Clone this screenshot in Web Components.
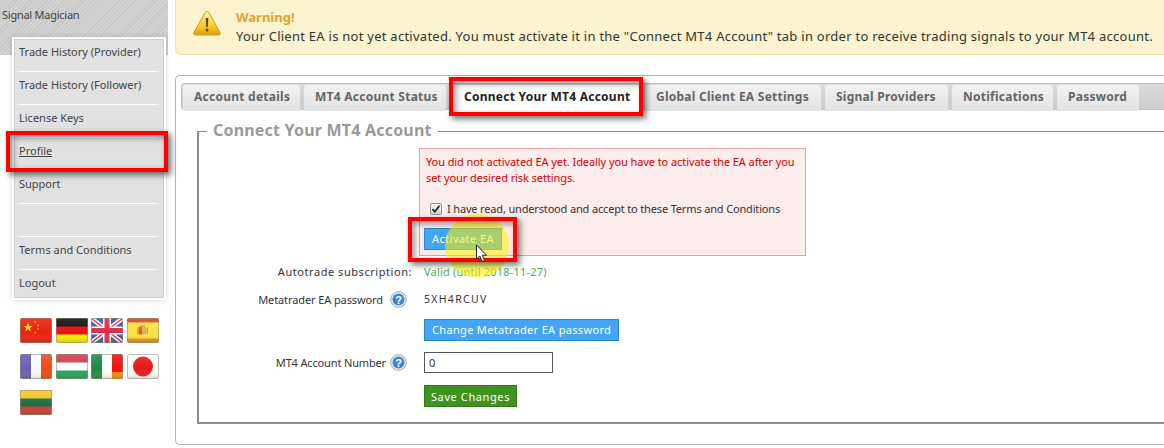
<!DOCTYPE html>
<html>
<head>
<meta charset="utf-8">
<title>Connect Your MT4 Account</title>
<style>
    html, body { margin: 0; height: 448px; overflow: hidden; background: #fff; }
    body { position: relative; font-family: "Noto Sans", "DejaVu Sans", sans-serif; font-size: 11px; color: #333; }
    #page { display: flex; align-items: flex-start; }
</style>
</head>
<body>
<div id="page">
    <side-bar title-text="Signal Magician">
        <menu-item>Trade History (Provider)</menu-item>
        <menu-item>Trade History (Follower)</menu-item>
        <menu-item>License Keys</menu-item>
        <menu-item active>Profile</menu-item>
        <menu-item>Support</menu-item>
        <menu-item></menu-item>
        <menu-item>Terms and Conditions</menu-item>
        <menu-item last>Logout</menu-item>
    </side-bar>
    <main-column>
        <warning-box heading="Warning!">Your Client EA is not yet activated. You must activate it in the "Connect MT4 Account" tab in order to receive trading signals to your MT4 account.</warning-box>
        <tab-panel>
            <tab-button slot="tabs" w="117">Account details</tab-button>
            <tab-button slot="tabs" w="142">MT4 Account Status</tab-button>
            <tab-button slot="tabs" w="191" active>Connect Your MT4 Account</tab-button>
            <tab-button slot="tabs" w="176">Global Client EA Settings</tab-button>
            <tab-button slot="tabs" w="123">Signal Providers</tab-button>
            <tab-button slot="tabs" w="101">Notifications</tab-button>
            <tab-button slot="tabs" w="82">Password</tab-button>
            <connect-form></connect-form>
        </tab-panel>
    </main-column>
</div>

<cursor-spot></cursor-spot>
<red-frame x="6" y="131" w="162" h="41"></red-frame>
<red-frame x="449" y="77" w="194" h="39"></red-frame>
<red-frame x="408" y="217" w="109" h="45"></red-frame>
<mouse-arrow></mouse-arrow>

<script>
class SideBar extends HTMLElement {
    constructor() {
        super();
        this.attachShadow({ mode: 'open' });
        this.shadowRoot.innerHTML = `
            <style>
                :host { display: block; width: 175px; flex: none; }
                .head {
                    width: 168px; height: 55px; box-sizing: border-box; padding: 8px 0 0 2px;
                    font-size: 11px; line-height: 14px; color: #444; letter-spacing: -.25px;
                    background: repeating-linear-gradient(135deg, #c6c6c6 0 1px, #d2d2d2 1px 3px);
                }
                .menu {
                    margin: -18px 0 0 12px; width: 154px; height: 263px; box-sizing: border-box;
                    border: 2px solid #fff; background: #e1e1e1; outline: 1px solid #cfcfcf; outline-offset: -3px;
                    box-shadow: 0 0 5px rgba(0,0,0,.18); padding: 0 7px 0 5px;
                }
                .flags {
                    display: grid; grid-template-columns: repeat(4, 32px); column-gap: 3.5px; row-gap: 11px;
                    margin: 18px 0 0 20px;
                }
            </style>
            <div class="head"></div>
            <div class="menu"><slot></slot></div>
            <div class="flags">
                <flag-icon name="cn"></flag-icon><flag-icon name="de"></flag-icon><flag-icon name="gb"></flag-icon><flag-icon name="es"></flag-icon>
                <flag-icon name="fr"></flag-icon><flag-icon name="hu"></flag-icon><flag-icon name="it"></flag-icon><flag-icon name="jp"></flag-icon>
                <flag-icon name="lt"></flag-icon>
            </div>`;
        this.shadowRoot.querySelector('.head').textContent = this.getAttribute('title-text');
    }
}
customElements.define('side-bar', SideBar);

class MenuItem extends HTMLElement {
    constructor() {
        super();
        this.attachShadow({ mode: 'open' });
        this.shadowRoot.innerHTML = `
            <style>
                :host {
                    display: block; height: 33px; box-sizing: border-box; line-height: 26px;
                    border-bottom: 1px solid #fbfbfb; color: #444; font-size: 11px; white-space: nowrap;
                }
                :host([last]) { border-bottom: 0; }
                :host([active]) { text-decoration: underline; }
            </style>
            <slot></slot>`;
    }
}
customElements.define('menu-item', MenuItem);

const flagArt = {
    cn: '<rect width="32" height="25" fill="#e8200f"/><path d="M8 4.500l1.100 3.400h3.500l-2.800 2.100 1 3.400L8 11.300l-2.800 2.100 1-3.400-2.800-2.100h3.500z" fill="#ffe000"/><g fill="#ffd000"><circle cx="15" cy="4" r=".8"/><circle cx="18" cy="7.500" r=".8"/><circle cx="18" cy="11" r=".8"/><circle cx="15" cy="14.500" r=".8"/></g>',
    de: '<rect width="32" height="25" fill="#f4f000"/><rect width="32" height="16.500" fill="#e81010"/><rect width="32" height="8.500" fill="#111"/>',
    gb: '<rect width="32" height="25" fill="#2f5da6"/><path d="M0 0l32 25M32 0L0 25" stroke="#fff" stroke-width="4.500"/><path d="M0 0l32 25M32 0L0 25" stroke="#d8304a" stroke-width="1.400"/><rect x="12" width="8" height="25" fill="#fff"/><rect y="8.500" width="32" height="8" fill="#fff"/><rect x="13.500" width="5" height="25" fill="#d8304a"/><rect y="10" width="32" height="5" fill="#d8304a"/>',
    es: '<rect width="32" height="25" fill="#e8941f"/><rect width="32" height="4.500" fill="#d2432a"/><rect y="4.500" width="32" height="16" fill="#fbe23f"/><rect x="11.500" y="9" width="4" height="7.500" rx="1" fill="#d0603a"/><rect x="15.500" y="9" width="4" height="7.500" rx="1" fill="#d8b060"/><rect x="13" y="7.500" width="5" height="1.500" fill="#c89a3a"/><rect x="10" y="9.500" width="1" height="6.500" fill="#b09a70"/><rect x="20" y="9.500" width="1" height="6.500" fill="#b09a70"/>',
    fr: '<rect width="32" height="25" fill="#fbfbff"/><rect width="11" height="25" fill="#6a5eb4"/><rect x="21" width="11" height="25" fill="#ec4a12"/>',
    hu: '<rect width="32" height="25" fill="#1ea25a"/><rect width="32" height="16.500" fill="#fff"/><rect width="32" height="8.500" fill="#d0404c"/>',
    it: '<rect width="32" height="25" fill="#fff"/><rect width="11" height="25" fill="#1c8a4a"/><rect x="21" width="11" height="25" fill="#f41010"/><rect x="21" y="18" width="11" height="7" fill="#f48a10"/>',
    jp: '<rect width="32" height="25" fill="#fff"/><circle cx="16" cy="12.500" r="10" fill="#e81818"/>',
    lt: '<rect width="32" height="25" fill="#c04038"/><rect width="32" height="16.500" fill="#1f6e42"/><rect width="32" height="8.500" fill="#f8c42c"/>'
};

class FlagIcon extends HTMLElement {
    constructor() {
        super();
        this.attachShadow({ mode: 'open' });
        const name = this.getAttribute('name');
        this.shadowRoot.innerHTML = `
            <style>
                :host { display: block; width: 32px; height: 25px; }
                svg { display: block; }
            </style>
            <svg width="32" height="25" viewBox="0 0 32 25">
                <defs>
                    <clipPath id="c"><rect width="32" height="25" rx="2"/></clipPath>
                    <linearGradient id="g" x1="0" y1="0" x2="0" y2="1">
                        <stop offset="0" stop-color="#fff" stop-opacity=".12"/>
                        <stop offset=".6" stop-color="#fff" stop-opacity="0"/>
                        <stop offset="1" stop-color="#804000" stop-opacity=".22"/>
                    </linearGradient>
                </defs>
                <g clip-path="url(#c)">${flagArt[name]}<rect width="32" height="25" fill="url(#g)"/></g>
                <rect x=".5" y=".5" width="31" height="24" rx="2" fill="none" stroke="#8a8a7a" stroke-opacity=".55"/>
            </svg>`;
    }
}
customElements.define('flag-icon', FlagIcon);

class MainColumn extends HTMLElement {
    constructor() {
        super();
        this.attachShadow({ mode: 'open' });
        this.shadowRoot.innerHTML = `
            <style>
                :host { display: block; width: 1010px; flex: none; }
            </style>
            <slot></slot>`;
    }
}
customElements.define('main-column', MainColumn);

class WarningBox extends HTMLElement {
    constructor() {
        super();
        this.attachShadow({ mode: 'open' });
        this.shadowRoot.innerHTML = `
            <style>
                :host {
                    display: flex; height: 55px; box-sizing: border-box; background: #fbf3cd;
                    border: 1px solid #f1e1a6; border-top: 0; border-right: 0; border-radius: 0 0 0 6px;
                    font-size: 13px; color: #333; white-space: nowrap; letter-spacing: .26px;
                }
                svg { margin: 10px 15px 0 17px; flex: none; }
                .txt { padding-top: 8px; line-height: 19px; }
                b { display: block; color: #e0a233; letter-spacing: 0; }
            </style>
            <svg width="28" height="26" viewBox="0 0 28 26">
                <defs><linearGradient id="w" x1="0" y1="0" x2="0" y2="1"><stop offset="0" stop-color="#fff3a0"/><stop offset=".7" stop-color="#f5c518"/><stop offset="1" stop-color="#e09a10"/></linearGradient></defs>
                <path d="M14 1.500c1 0 1.700.6 2.200 1.500l10.800 19.500c.7 1.300 0 2.500-1.500 2.500H2.500C1 25 .3 23.800 1 22.500L11.800 3c.5-.9 1.200-1.500 2.200-1.500z" fill="url(#w)" stroke="#c99a2e"/>
                <path d="M12.700 8h2.600l-.5 9h-1.600z" fill="#5b4a1c"/><circle cx="14" cy="20" r="1.500" fill="#5b4a1c"/>
            </svg>
            <div class="txt"><b></b><slot></slot></div>`;
        this.shadowRoot.querySelector('b').textContent = this.getAttribute('heading');
    }
}
customElements.define('warning-box', WarningBox);

class TabPanel extends HTMLElement {
    constructor() {
        super();
        this.attachShadow({ mode: 'open' });
        this.shadowRoot.innerHTML = `
            <style>
                :host {
                    display: block; margin-top: 20px; height: 370px; box-sizing: border-box;
                    border: 1px solid #b4b4b4; border-right: 0; border-radius: 5px 0 0 5px; padding: 7px 0 0 5px;
                }
                .bar {
                    display: flex; gap: 4px; height: 27px; box-sizing: border-box; padding: 1px 0 0 1px;
                    background: linear-gradient(#dcdcdc, #cbcbcb); border: 1px solid #c0c0c0; border-right: 0;
                    border-radius: 4px 0 0 4px;
                }
                .body { padding: 21px 0 0 16px; }
            </style>
            <div class="bar"><slot name="tabs"></slot></div>
            <div class="body"><slot></slot></div>`;
    }
}
customElements.define('tab-panel', TabPanel);

class TabButton extends HTMLElement {
    constructor() {
        super();
        this.attachShadow({ mode: 'open' });
        this.shadowRoot.innerHTML = `
            <style>
                :host {
                    display: block; height: 26px; box-sizing: border-box; flex: none; padding-left: 11px;
                    background: linear-gradient(#f2f2f2, #e2e2e2); border-radius: 3px 3px 0 0;
                    font-weight: bold; font-size: 12px; letter-spacing: .25px; line-height: 24px; color: #666; white-space: nowrap;
                }
                :host([active]) { background: #fff; color: #222; height: 28px; padding-left: 14px; }
            </style>
            <slot></slot>`;
        this.style.width = this.getAttribute('w') + 'px';
    }
}
customElements.define('tab-button', TabButton);

class ConnectForm extends HTMLElement {
    constructor() {
        super();
        this.attachShadow({ mode: 'open' });
        this.shadowRoot.innerHTML = `
            <style>
                :host {
                    display: block; position: relative; height: 293px; box-sizing: border-box;
                    border: 2px solid #8c8c8c; border-right: 0; border-top-width: 1px; padding: 16px 0 0 0;
                    border-bottom-width: 2px;
                }
                .legend {
                    position: absolute; left: 8px; top: -11px; background: #fff; padding: 0 6px;
                    font-size: 16px; letter-spacing: .2px; font-weight: bold; line-height: 18px; color: #999; white-space: nowrap;
                }
                .grid { display: grid; grid-template-columns: 213px auto; column-gap: 12px; justify-content: start; font-size: 11px; color: #333; }
                .label { display: flex; justify-content: flex-end; align-items: center; white-space: nowrap; letter-spacing: -.1px; }
                .label help-icon { margin: 0 5px 0 7px; }
                .label.tight { letter-spacing: -.15px; }
                .label.tight help-icon { margin-left: 4px; }
                .val { display: flex; align-items: center; white-space: nowrap; }
                .alert {
                    grid-column: 2; margin-left: -5px; width: 387px; height: 108px; box-sizing: border-box;
                    border: 1px solid #e2a4a4; background: #fdecec; padding: 5px 2px 5px 6px; color: #d40000; line-height: 16px;
                    letter-spacing: -.08px;
                }
                .check { display: flex; align-items: center; gap: 5px; color: #333; margin: 15px 0 0 4px; letter-spacing: -.16px; }
                .box {
                    width: 12px; height: 12px; box-sizing: border-box; border: 1px solid #8f8f8f; border-radius: 2px;
                    background: linear-gradient(#f4f4f4, #d6d6d6); flex: none;
                }
                .box svg { display: block; }
                button {
                    font: inherit; color: #fff; border: 1px solid #2d86d0; background: #42a5f5; padding: 0 7px;
                    height: 22px; border-radius: 0; white-space: nowrap; letter-spacing: .33px;
                }
                .alert button { display: block; width: 78px; margin: 11px 0 0 -2px; padding: 0; letter-spacing: .45px; }
                button.green { background: #3f9420; border-color: #2f7a16; width: 93px; padding: 0; letter-spacing: .6px; }
                .text-in { width: 129px; height: 21px; box-sizing: border-box; border: 1px solid #555; font: inherit; padding: 0 4px; color: #333; }
                .r1 { height: 28px; margin-top: 1px; } .r2 { height: 28px; } .r3 { height: 25px; padding-top: 4px; }
                .r4 { height: 23px; margin-top: 9px; } .r5 { margin-top: 11px; }
                .ok { color: #4caf50; letter-spacing: .2px; }
                .wide { letter-spacing: .55px; }
                .code { font-size: 10.5px; letter-spacing: 1.300px; }
            </style>
            <div class="legend">Connect Your MT4 Account</div>
            <div class="grid">
                <div class="alert">
                    You did not activated EA yet. Ideally you have to activate the EA after you set your desired risk settings.
                    <label class="check"><span class="box"><svg width="10" height="10" viewBox="0 0 10 10"><path d="M1.500 5.200l2.300 2.500 4.700-6" fill="none" stroke="#222" stroke-width="1.800"/></svg></span>I have read, understood and accept to these Terms and Conditions</label>
                    <button>Activate EA</button>
                </div>
                <div class="label r1 wide">Autotrade subscription:</div><div class="val r1 ok">Valid (until 2018-11-27)</div>
                <div class="label r2">Metatrader EA password <help-icon></help-icon></div><div class="val r2 code">5XH4RCUV</div>
                <div class="r3"></div><div class="val r3"><button>Change Metatrader EA password</button></div>
                <div class="label r4 tight">MT4 Account Number <help-icon></help-icon></div><div class="val r4"><input class="text-in" value="0"></div>
                <div class="r5"></div><div class="val r5"><button class="green">Save Changes</button></div>
            </div>`;
    }
}
customElements.define('connect-form', ConnectForm);

class HelpIcon extends HTMLElement {
    constructor() {
        super();
        this.attachShadow({ mode: 'open' });
        this.shadowRoot.innerHTML = `
            <style>
                :host { display: block; width: 17px; height: 17px; flex: none; }
                svg { display: block; }
                text { font: bold 11px "Liberation Sans", sans-serif; fill: #fff; }
            </style>
            <svg width="17" height="17" viewBox="0 0 17 17">
                <circle cx="8.500" cy="8.500" r="7.800" fill="#e8eef4" stroke="#9aa6b2"/>
                <circle cx="8.500" cy="8.500" r="6" fill="#3f86d0"/>
                <text x="8.500" y="12.500" text-anchor="middle">?</text>
            </svg>`;
    }
}
customElements.define('help-icon', HelpIcon);

class RedFrame extends HTMLElement {
    constructor() {
        super();
        this.attachShadow({ mode: 'open' });
        this.shadowRoot.innerHTML = `
            <style>
                :host {
                    display: block; position: absolute; box-sizing: border-box; border: 4px solid #f00;
                    box-shadow: 3px 3px 6px rgba(0,0,0,.55), inset 3px 3px 6px rgba(0,0,0,.4);
                    pointer-events: none;
                }
            </style>`;
        for (const [attr, prop] of [['x', 'left'], ['y', 'top'], ['w', 'width'], ['h', 'height']]) {
            this.style[prop] = this.getAttribute(attr) + 'px';
        }
    }
}
customElements.define('red-frame', RedFrame);

class CursorSpot extends HTMLElement {
    constructor() {
        super();
        this.attachShadow({ mode: 'open' });
        this.shadowRoot.innerHTML = `
            <style>
                :host {
                    display: block; position: absolute; left: 445px; top: 214px; width: 64px; height: 64px;
                    border-radius: 50%; background: rgba(255,240,0,.55);
                }
            </style>`;
    }
}
customElements.define('cursor-spot', CursorSpot);

class MouseArrow extends HTMLElement {
    constructor() {
        super();
        this.attachShadow({ mode: 'open' });
        this.shadowRoot.innerHTML = `
            <style>
                :host { display: block; position: absolute; left: 475px; top: 244px; width: 14px; height: 20px; }
                svg { display: block; }
            </style>
            <svg width="14" height="20" viewBox="0 0 14 20"><path d="M1.500 1v14l3.300-3 2.200 5.500 2.600-1-2.300-5.300h4.300z" fill="#fff" stroke="#222"/></svg>`;
    }
}
customElements.define('mouse-arrow', MouseArrow);
</script>
</body>
</html>
